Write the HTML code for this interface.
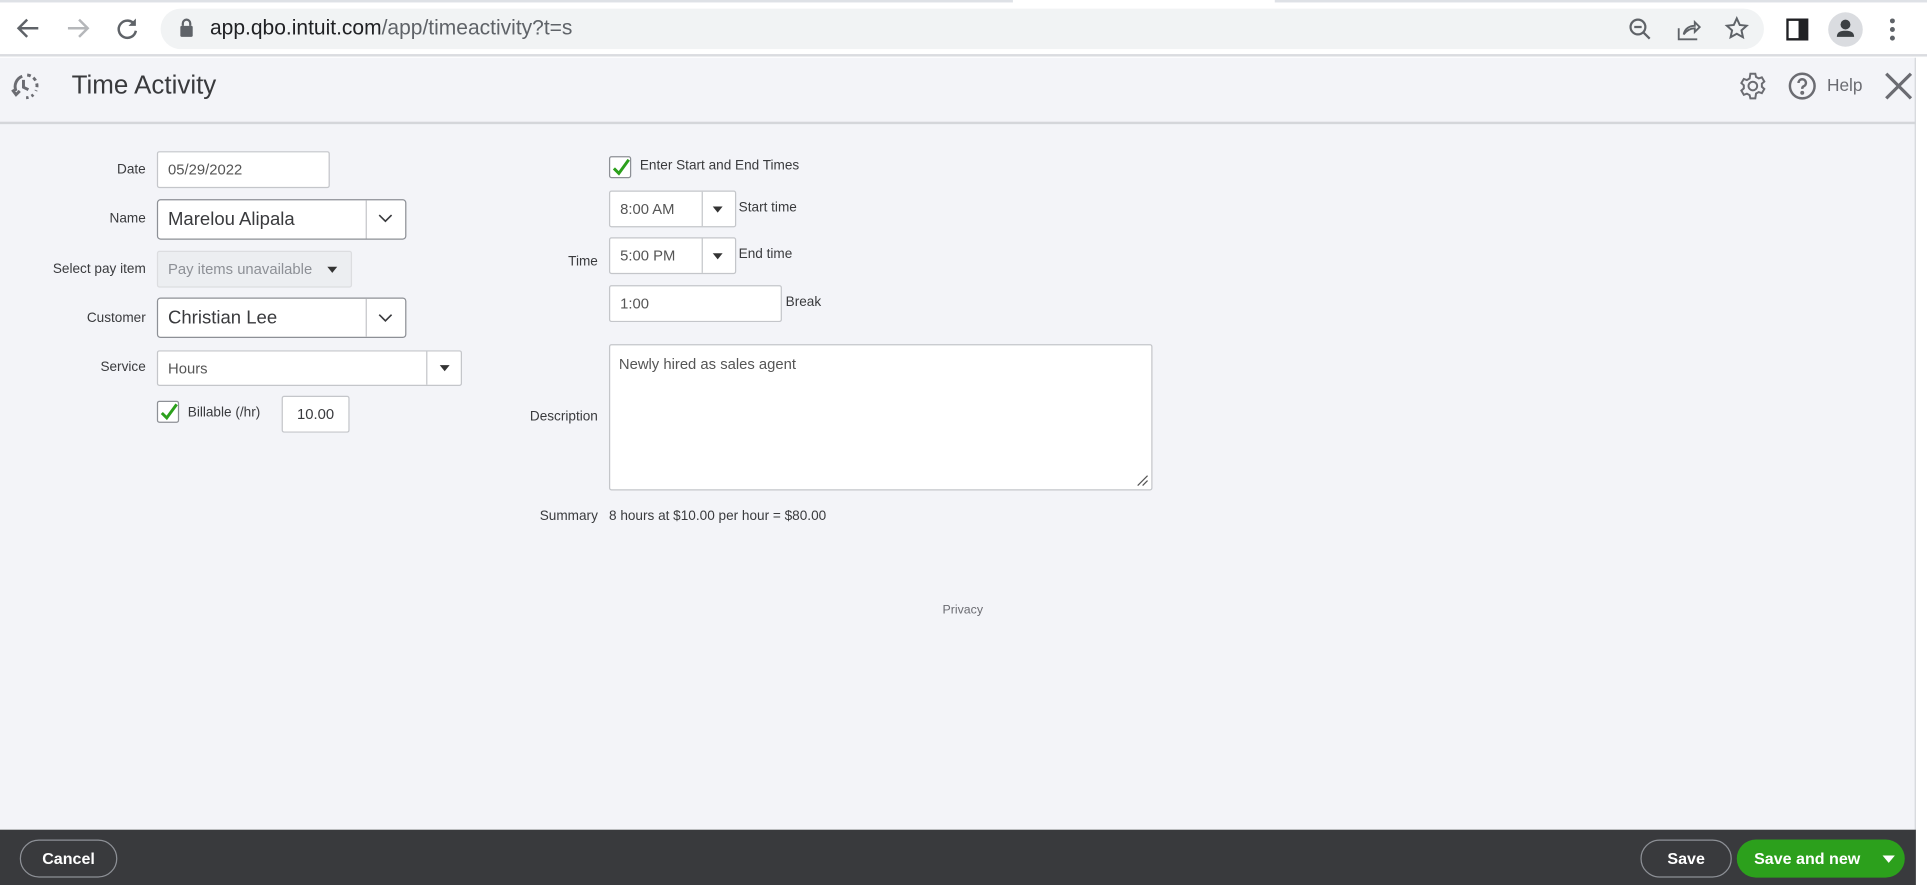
<!DOCTYPE html>
<html><head><meta charset="utf-8"><style>
*{box-sizing:border-box;margin:0;padding:0}
html,body{width:1927px;height:885px;overflow:hidden;background:#fff;font-family:"Liberation Sans",Arial,sans-serif}
#w{position:absolute;left:0;top:0;width:1560px;height:720px;transform:scale(1.23526,1.22917);transform-origin:0 0;background:#fff}
.a{position:absolute}
.lbl{position:absolute;font-size:11px;color:#393a3d;text-align:right}
.in{position:absolute;background:#fff;border:1px solid #c4c6ca;border-radius:2px;font-size:12px;color:#555;padding-left:8px;display:flex;align-items:center}
.tri{width:0;height:0;border-left:4px solid transparent;border-right:4px solid transparent;border-top:5px solid #333}
.cb{position:absolute;width:18px;height:18px;border:1px solid #8d9096;border-radius:2px;background:#fff}
</style></head><body><div id="w">
<!-- browser bar -->
<div class="a" style="left:0;top:0;width:1560px;height:46px;background:#fff;border-bottom:2px solid #dadce0"></div>
<div class="a" style="left:0;top:0;width:820px;height:2px;background:#dee1e6"></div>
<div class="a" style="left:1032px;top:0;width:528px;height:2px;background:#dee1e6"></div>
<svg class="a" style="left:12px;top:12px" width="22" height="22" viewBox="0 0 22 22" fill="none" stroke="#5f6368" stroke-width="2"><path d="M19 11H4M10 4l-7 7 7 7"/></svg>
<svg class="a" style="left:52px;top:12px" width="22" height="22" viewBox="0 0 22 22" fill="none" stroke="#b5b7ba" stroke-width="2"><path d="M3 11h15M12 4l7 7-7 7"/></svg>
<svg class="a" style="left:92px;top:12px" width="22" height="22" viewBox="0 0 22 22" fill="none" stroke="#5f6368" stroke-width="2"><path d="M17 8a7 7 0 1 0 1 5"/><path d="M18 3v6h-6" fill="#5f6368" stroke="none"/></svg>
<div class="a" style="left:130px;top:7px;width:1298px;height:33px;background:#f1f3f4;border-radius:17px"></div>
<svg class="a" style="left:145px;top:15px" width="12" height="16" viewBox="0 0 12 16"><rect x="1" y="6" width="10" height="9" rx="1" fill="#5f6368"/><path d="M3 6V4a3 3 0 0 1 6 0v2" stroke="#5f6368" stroke-width="1.8" fill="none"/></svg>
<div class="a" style="left:170px;top:13px;font-size:17px;color:#202124">app.qbo.intuit.com<span style="color:#5f6368">/app/timeactivity?t=s</span></div>
<svg class="a" style="left:1318px;top:14px" width="20" height="20" viewBox="0 0 20 20" fill="none" stroke="#5f6368" stroke-width="1.8"><circle cx="8" cy="8" r="6"/><path d="M5 8h6M12.5 12.5l5 5"/></svg>
<svg class="a" style="left:1357px;top:14px" width="20" height="20" viewBox="0 0 20 20" fill="none" stroke="#5f6368" stroke-width="1.5"><path d="M2 9v9h15M6 14c1-5 5-7 9-7V4l4 4-4 4V9c-3 0-6 1-9 5z"/></svg>
<svg class="a" style="left:1396px;top:13px" width="20" height="20" viewBox="0 0 20 20" fill="none" stroke="#5f6368" stroke-width="1.6"><path d="M10 2l2.4 5.3 5.6.6-4.2 3.8 1.2 5.6L10 14.5l-5 2.8 1.2-5.6L2 7.9l5.6-.6z"/></svg>
<svg class="a" style="left:1446px;top:15px" width="18" height="18" viewBox="0 0 18 18"><rect x="1" y="1" width="16" height="16" fill="none" stroke="#202124" stroke-width="2"/><rect x="10" y="1" width="7" height="16" fill="#202124"/></svg>
<div class="a" style="left:1480px;top:10px;width:28px;height:28px;border-radius:50%;background:#dadce0"></div>
<svg class="a" style="left:1484px;top:13px" width="20" height="20" viewBox="0 0 20 20" fill="#3c4043"><circle cx="10" cy="7" r="4"/><path d="M3 17c0-4 3-5 7-5s7 1 7 5z"/></svg>
<svg class="a" style="left:1528px;top:14px" width="8" height="20" viewBox="0 0 8 20" fill="#5f6368"><circle cx="4" cy="3" r="2"/><circle cx="4" cy="10" r="2"/><circle cx="4" cy="17" r="2"/></svg>
<!-- page -->
<div class="a" style="left:0;top:47px;width:1551px;height:628px;background:#f3f4f8;border-right:1px solid #d4d6da"></div>
<div class="a" style="left:0;top:99px;width:1551px;height:2px;background:#d4d6da"></div>
<svg class="a" style="left:8px;top:57px" width="26" height="26" viewBox="0 0 26 26" fill="none" stroke="#6b6c72" stroke-width="2.4"><path d="M5 17a9 9 0 0 1 5-12" /><path d="M14 4a9 9 0 0 1 7 13" stroke-dasharray="3 2.5"/><path d="M19 20a9 9 0 0 1-7 2.5" stroke-dasharray="2 2.5"/><path d="M11 8v6l4 2"/><path d="M2 16l3 4 3-3" /></svg>
<div class="a" style="left:58px;top:58px;font-size:21px;color:#393a3d">Time Activity</div>
<svg class="a" style="left:1407px;top:58px" width="24" height="24" viewBox="0 0 24 24" fill="none" stroke="#6b6c72" stroke-width="1.6"><circle cx="12" cy="12" r="3.5"/><path d="M10 2h4l.6 2.6 2.2 1.2 2.5-.9 2 3.4-2 1.8v2.5l2 1.8-2 3.4-2.5-.9-2.2 1.2L14 22h-4l-.6-2.6-2.2-1.2-2.5.9-2-3.4 2-1.8V11.4l-2-1.8 2-3.4 2.5.9 2.2-1.2z"/></svg>
<svg class="a" style="left:1447px;top:58px" width="24" height="24" viewBox="0 0 24 24" fill="none" stroke="#6b6c72" stroke-width="2"><circle cx="12" cy="12" r="10"/><path d="M9 9.5a3 3 0 1 1 4 2.8c-.8.4-1 1-1 2"/><circle cx="12" cy="17.5" r=".6" fill="#6b6c72"/></svg>
<div class="a" style="left:1479px;top:61px;font-size:14px;color:#6b6c72">Help</div>
<svg class="a" style="left:1525px;top:58px" width="24" height="24" viewBox="0 0 24 24" stroke="#6b6c72" stroke-width="2.6"><path d="M2 2l20 20M22 2L2 22"/></svg>
<!-- left form -->
<div class="lbl" style="left:0;width:118px;top:132px">Date</div>
<div class="in" style="left:127px;top:123px;width:140px;height:30px">05/29/2022</div>
<div class="lbl" style="left:0;width:118px;top:172px">Name</div>
<div class="in" style="left:127px;top:162px;width:202px;height:33px;border-color:#8d9096;border-radius:3px;font-size:15px;color:#393a3d">Marelou Alipala</div>
<div class="a" style="left:296px;top:163px;width:1px;height:31px;background:#c4c6ca"></div>
<svg class="a" style="left:306px;top:174px" width="12" height="8" viewBox="0 0 12 8" fill="none" stroke="#393a3d" stroke-width="1.3"><path d="M1 1l5 5 5-5"/></svg>
<div class="lbl" style="left:0;width:118px;top:213px">Select pay item</div>
<div class="in" style="left:127px;top:204px;width:158px;height:30px;background:#eceef1;border-color:#dcdde0;color:#8d9096">Pay items unavailable</div>
<div class="tri a" style="left:265px;top:217px"></div>
<div class="lbl" style="left:0;width:118px;top:253px">Customer</div>
<div class="in" style="left:127px;top:242px;width:202px;height:33px;border-color:#8d9096;border-radius:3px;font-size:15px;color:#393a3d">Christian Lee</div>
<div class="a" style="left:296px;top:243px;width:1px;height:31px;background:#c4c6ca"></div>
<svg class="a" style="left:306px;top:255px" width="12" height="8" viewBox="0 0 12 8" fill="none" stroke="#393a3d" stroke-width="1.3"><path d="M1 1l5 5 5-5"/></svg>
<div class="lbl" style="left:0;width:118px;top:293px">Service</div>
<div class="in" style="left:127px;top:285px;width:247px;height:29px">Hours</div>
<div class="a" style="left:345px;top:286px;width:1px;height:27px;background:#c4c6ca"></div>
<div class="tri a" style="left:356px;top:297px"></div>
<div class="cb" style="left:127px;top:326px"></div>
<svg class="a" style="left:129px;top:327px" width="16" height="16" viewBox="0 0 16 16" fill="none" stroke="#2ca01c" stroke-width="2.4"><path d="M2 9l4 4 8-11"/></svg>
<div class="a" style="left:152px;top:330px;font-size:11px;color:#393a3d">Billable (/hr)</div>
<div class="in" style="left:228px;top:322px;width:55px;height:30px;justify-content:center;padding:0;color:#393a3d;font-size:12px">10.00</div>
<!-- right form -->
<div class="cb" style="left:493px;top:127px"></div>
<svg class="a" style="left:495px;top:128px" width="16" height="16" viewBox="0 0 16 16" fill="none" stroke="#2ca01c" stroke-width="2.4"><path d="M2 9l4 4 8-11"/></svg>
<div class="a" style="left:518px;top:129px;font-size:11px;color:#393a3d">Enter Start and End Times</div>
<div class="in" style="left:493px;top:155px;width:103px;height:30px">8:00 AM</div>
<div class="a" style="left:568px;top:156px;width:1px;height:28px;background:#c4c6ca"></div>
<div class="tri a" style="left:577px;top:168px"></div>
<div class="a" style="left:598px;top:163px;font-size:11px;color:#393a3d">Start time</div>
<div class="lbl" style="left:380px;width:104px;top:207px">Time</div>
<div class="in" style="left:493px;top:193px;width:103px;height:30px">5:00 PM</div>
<div class="a" style="left:568px;top:194px;width:1px;height:28px;background:#c4c6ca"></div>
<div class="tri a" style="left:577px;top:206px"></div>
<div class="a" style="left:598px;top:201px;font-size:11px;color:#393a3d">End time</div>
<div class="in" style="left:493px;top:232px;width:140px;height:30px">1:00</div>
<div class="a" style="left:636px;top:240px;font-size:11px;color:#393a3d">Break</div>
<div class="lbl" style="left:380px;width:104px;top:333px">Description</div>
<div class="a" style="left:493px;top:280px;width:440px;height:119px;background:#fff;border:1px solid #c4c6ca;border-radius:2px;font-size:12px;color:#555;padding:8px 7px">Newly hired as sales agent</div>
<svg class="a" style="left:920px;top:386px" width="10" height="10" viewBox="0 0 10 10" stroke="#555" stroke-width="1"><path d="M1 9L9 1M5 9l4-4"/></svg>
<div class="lbl" style="left:380px;width:104px;top:414px">Summary</div>
<div class="a" style="left:493px;top:414px;font-size:11px;color:#393a3d">8 hours at $10.00 per hour = $80.00</div>
<div class="a" style="left:763px;top:491px;font-size:10px;color:#6b6c72">Privacy</div>
<!-- footer -->
<div class="a" style="left:0;top:675px;width:1551px;height:45px;background:#393a3d"></div>
<div class="a" style="left:16px;top:683px;width:79px;height:31px;border:1px solid #8d9096;border-radius:16px;color:#fff;font-size:13px;font-weight:bold;text-align:center;line-height:29px">Cancel</div>
<div class="a" style="left:1328px;top:683px;width:74px;height:31px;border:1px solid #8d9096;border-radius:16px;color:#fff;font-size:13px;font-weight:bold;text-align:center;line-height:29px">Save</div>
<div class="a" style="left:1406px;top:683px;width:136px;height:31px;background:#2ca01c;border-radius:16px;color:#fff;font-size:13px;font-weight:bold;line-height:31px;padding-left:14px">Save and new</div>
<div class="a" style="left:1524px;top:696px;width:0;height:0;border-left:5px solid transparent;border-right:5px solid transparent;border-top:6px solid #fff"></div>
</div></body></html>
